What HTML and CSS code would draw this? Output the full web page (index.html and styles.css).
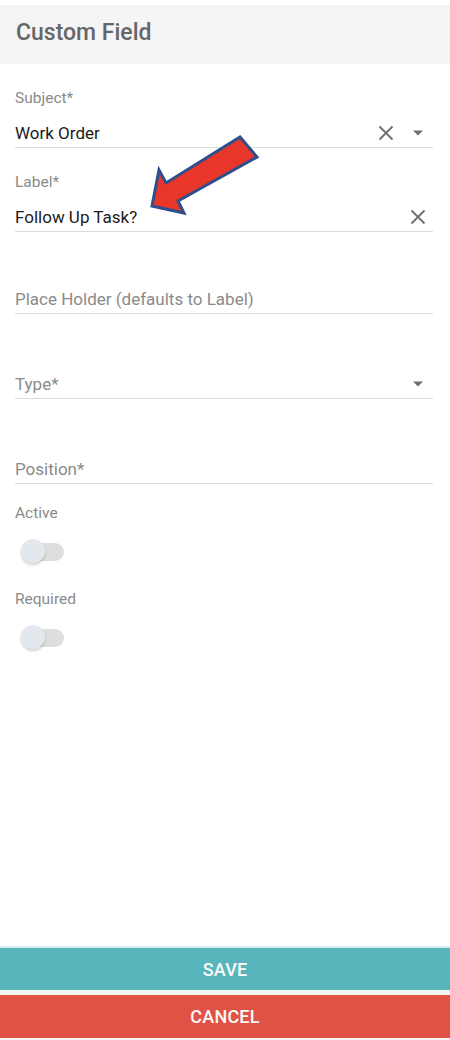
FILE: index.html
```html
<!doctype html>
<html lang="en">
<head>
<meta charset="utf-8">
<meta name="viewport" content="width=device-width, initial-scale=1.0">
<title>Custom Field</title>
<link rel="stylesheet" href="styles.css">
</head>
<body>
  <div class="page">
    <div class="header">Custom Field</div>

    <div class="form">
      <div class="field">
        <div class="field-label">Subject*</div>
        <div class="field-row">
          <span class="value">Work Order</span>
          <svg class="icon-x gap" width="16" height="16" viewBox="0 0 16 16"><path d="M1.5 1.5L14.5 14.5M14.5 1.5L1.5 14.5" /></svg>
          <svg class="icon-caret" width="12" height="6" viewBox="0 0 12 6"><path d="M1 0.5H11L6 5.5Z" /></svg>
        </div>
      </div>

      <div class="field field-last">
        <div class="field-label">Label*</div>
        <div class="field-row">
          <span class="value">Follow Up Task?</span>
          <svg class="icon-x" width="16" height="16" viewBox="0 0 16 16"><path d="M1.5 1.5L14.5 14.5M14.5 1.5L1.5 14.5" /></svg>
        </div>
      </div>

      <div class="field field-empty">
        <div class="field-row">
          <span class="placeholder">Place Holder (defaults to Label)</span>
        </div>
      </div>

      <div class="field field-empty">
        <div class="field-row">
          <span class="placeholder">Type*</span>
          <svg class="icon-caret" width="12" height="6" viewBox="0 0 12 6"><path d="M1 0.5H11L6 5.5Z" /></svg>
        </div>
      </div>

      <div class="field field-empty">
        <div class="field-row">
          <span class="placeholder">Position*</span>
        </div>
      </div>

      <div class="switch-group first">
        <div class="switch-label">Active</div>
        <div class="switch"><span class="switch-track"></span><span class="switch-thumb"></span></div>
      </div>

      <div class="switch-group">
        <div class="switch-label">Required</div>
        <div class="switch"><span class="switch-track"></span><span class="switch-thumb"></span></div>
      </div>
    </div>

    <div class="actions">
      <button class="btn btn-save">SAVE</button>
      <button class="btn btn-cancel">CANCEL</button>
    </div>

    <!-- callout arrow drawn over the form -->
    <svg class="callout" width="120" height="90" viewBox="0 0 120 90">
      <polygon points="7,76 14,40 21,53 95,7 112,27 33,71 39,83" />
    </svg>
  </div>
</body>
</html>
```

FILE: styles.css
```css
* {
  margin: 0;
  padding: 0;
  box-sizing: border-box;
}
body {
  background-color: #fff;
  font-family: Roboto, "Liberation Sans", Arial, sans-serif;
}
.page {
  width: 450px;
  height: 1040px;
  display: flex;
  flex-direction: column;
  position: relative;
  padding-top: 5px;
}
.header {
  height: 59px;
  line-height: 56px;
  background-color: #f5f5f5;
  padding-left: 16px;
  font-size: 23px;
  font-weight: 500;
  color: #666;
}
.form {
  flex: 1;
  padding: 25px 17px 0 15px;
}
.field {
  margin-bottom: 25px;
}
.field-last {
  margin-bottom: 22px;
}
.field-label {
  font-size: 15.5px;
  line-height: 18px;
  color: #8a8a8a;
  margin-bottom: 14px;
}
.field-empty {
  padding-top: 33px;
}
.field-row {
  display: flex;
  align-items: center;
  height: 27px;
  padding-bottom: 2px;
  border-bottom: 1px solid #dcdcdc;
  font-size: 17px;
  line-height: 24px;
}
.value {
  flex: 1;
  color: #1b1b1b;
}
.placeholder {
  flex: 1;
  color: #8a8a8a;
}
.icon-x {
  margin-right: 7px;
}
.icon-x.gap {
  margin-right: 18px;
}
.icon-x path {
  stroke: #6f6f6f;
  stroke-width: 1.8;
  fill: none;
}
.icon-caret {
  margin-right: 9px;
}
.icon-caret path {
  fill: #6f6f6f;
}
.switch-group.first {
  margin-top: -5px;
}
.switch-group {
  margin-bottom: 19px;
}
.switch-label {
  font-size: 15.5px;
  line-height: 18px;
  color: #8a8a8a;
}
.switch {
  position: relative;
  height: 40px;
  margin-top: 9px;
  width: 60px;
}
.switch-track {
  position: absolute;
  left: 8px;
  top: 12px;
  width: 41px;
  height: 18px;
  border-radius: 9px;
  background-color: #dedede;
}
.switch-thumb {
  position: absolute;
  left: 6px;
  top: 8px;
  width: 24px;
  height: 24px;
  border-radius: 50%;
  background-color: #e3e8ee;
  box-shadow: 0 2px 3px rgba(0, 0, 0, 0.18);
}
.actions {
  display: flex;
  flex-direction: column;
  gap: 5px;
  background-color: #f3f3f3;
  padding-bottom: 2px;
  border-top: 2px solid #d6eef0;
}
.btn {
  border: none;
  width: 100%;
  font-family: Roboto, "Liberation Sans", Arial, sans-serif;
  font-size: 18px;
  font-weight: 500;
  color: #fafafa;
  letter-spacing: 0.2px;
}
.btn-save {
  height: 42px;
  background-color: #58b5bb;
}
.btn-cancel {
  height: 43px;
  background-color: #e05243;
}
.callout {
  position: absolute;
  left: 145px;
  top: 130px;
}
.callout polygon {
  fill: #e8372a;
  stroke: #2f4f8c;
  stroke-width: 3;
  stroke-linejoin: miter;
}
```
